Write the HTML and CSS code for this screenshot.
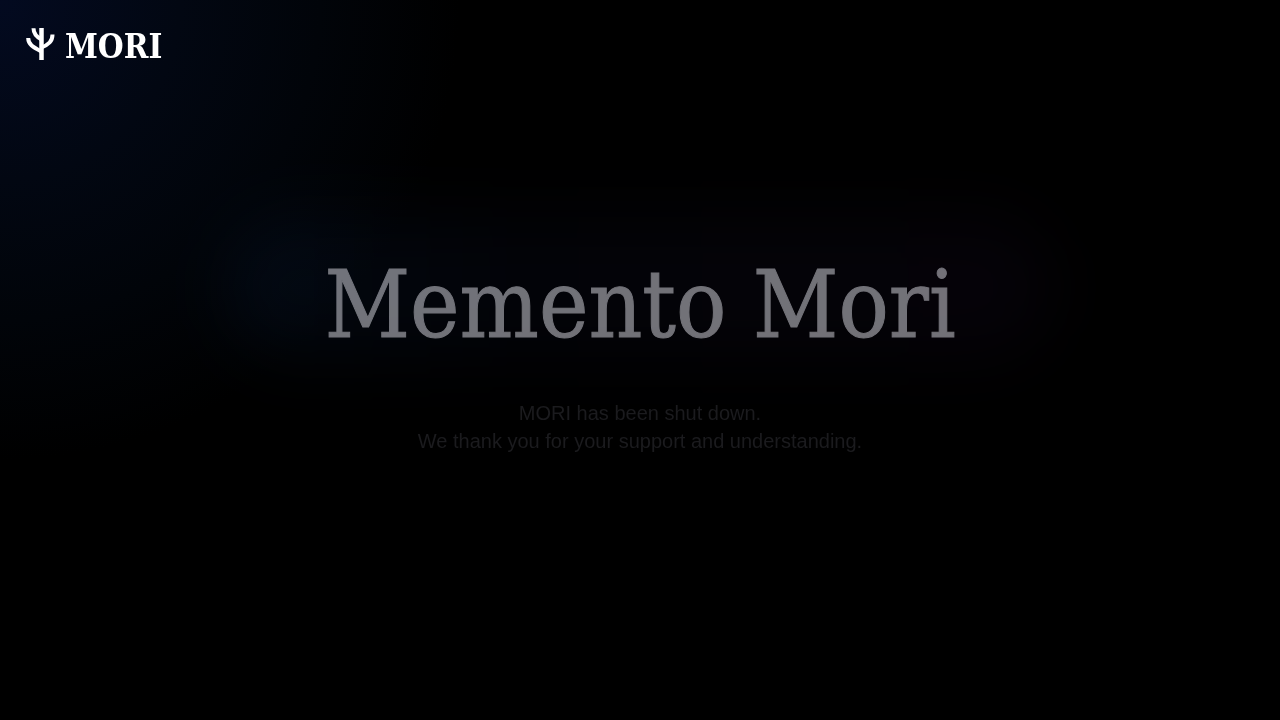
FILE: index.html
```html
<!DOCTYPE html>
<html lang="en">
<head>
  <meta charset="utf-8">
  <meta name="viewport" content="width=device-width, initial-scale=1">
  <title>MORI</title>
  <link rel="stylesheet" href="styles.css">
</head>
<body class="page">
  <header class="header">
    <a class="brand" href="#">
      <svg class="brand-icon" viewBox="0 0 30 34" fill="none" stroke="currentColor" stroke-width="4" aria-hidden="true">
        <path d="M16.500 1v32" stroke-width="4.500"/>
        <path d="M8.500 1.200C8.500 6.500 11 9.500 16.500 12.500"/>
        <path d="M3.200 11C3.200 17.500 8 20 16.500 24.500"/>
        <path d="M27.500 7.500C27.500 14.500 23.500 17.500 16.500 20.500"/>
      </svg>
      <span>MORI</span>
    </a>
  </header>
  <main class="hero">
    <h1 class="title">Memento Mori</h1>
    <p class="message">MORI has been shut down.<br>We thank you for your support and understanding.</p>
  </main>
</body>
</html>
```
FILE: styles.css
```css
.page {
  box-sizing: border-box;
  min-height: 100vh;
  margin: 0;
  display: flex;
  flex-direction: column;
  background: radial-gradient(circle at 0 0, #030a20 0, #020712 180px, #010409 320px, #000 460px) #000;
  color: #fff;
  font-family: "Liberation Sans", Arial, sans-serif;
}

.header {
  display: flex;
  padding: 24px 25px;
}

.brand {
  display: flex;
  align-items: flex-start;
  gap: 10px;
  color: #fff;
  font: bold 33px/46px "DejaVu Serif Condensed", "DejaVu Serif", serif;
  font-stretch: condensed;
  text-decoration: none;
}

.brand-icon {
  width: 30px;
  height: 34px;
  margin-top: 3px;
}

.hero {
  display: flex;
  flex-direction: column;
  align-items: center;
  padding: 155px 24px 48px;
  text-align: center;
}

.title {
  position: relative;
  margin: 0;
  color: #707074;
  font: 93px/112px "DejaVu Serif Condensed", "DejaVu Serif", serif;
  -webkit-text-stroke: 1px currentColor;
}

.title::before {
  content: "";
  position: absolute;
  inset: -32px -96px 4px;
  border-radius: 80px;
  background: linear-gradient(90deg, #020810, #020308 35%, #040308 65%, #050208);
  filter: blur(32px);
  mix-blend-mode: screen;
  pointer-events: none;
}

.message {
  margin: 38px 0 0;
  color: #1b1b1e;
  font-size: 20px;
  line-height: 28px;
}
```
